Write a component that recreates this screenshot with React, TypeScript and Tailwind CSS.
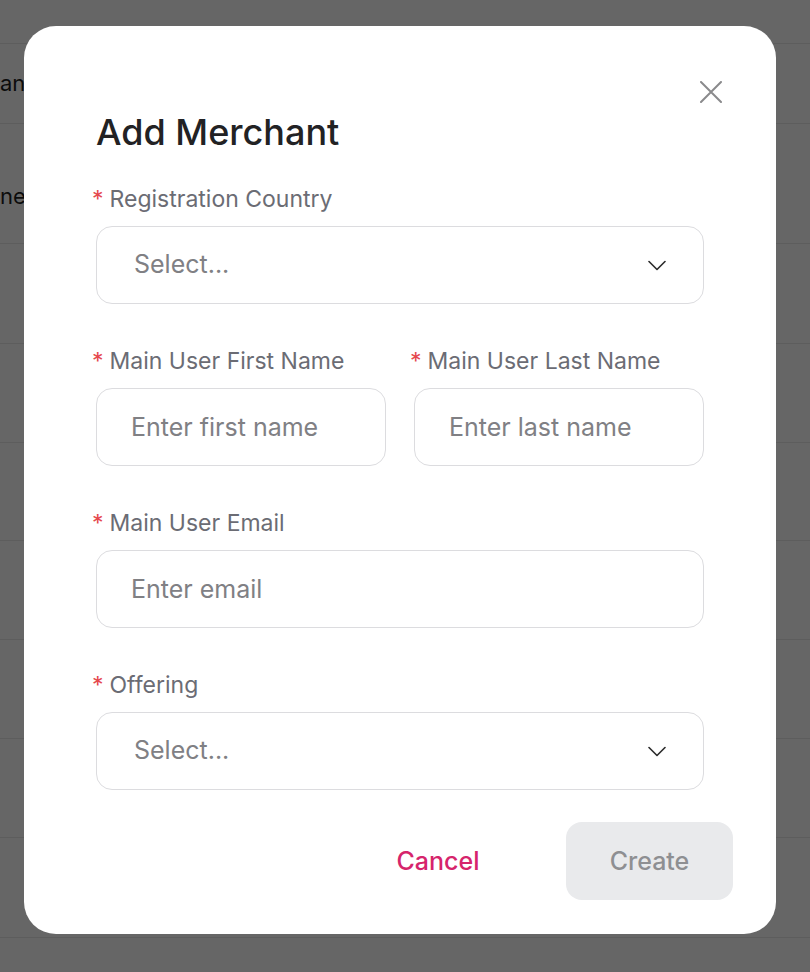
import { ReactNode } from 'react';

// Add Merchant modal over a dimmed list page

const rows = [
  { h: 'h-[80px]', text: 'anagement' },
  { h: 'h-[120px]', text: 'nel', pad: 'pt-[26px]' },
  { h: 'h-[100px]', text: '' },
  { h: 'h-[99px]', text: '' },
  { h: 'h-[98px]', text: '' },
  { h: 'h-[99px]', text: '' },
  { h: 'h-[99px]', text: '' },
  { h: 'h-[99px]', text: '' },
  { h: 'h-[100px]', text: '' },
];

function Label({ children }: { children: ReactNode }) {
  return (
    <div className="-ml-[4px] flex h-[30px] items-center text-[23px] leading-[30px] text-[#6b6c74]">
      <span className="mr-[6px] text-[#e5484d]">*</span>
      {children}
    </div>
  );
}

function Chevron() {
  return (
    <svg width="18" height="11" viewBox="0 0 18 11" fill="none">
      <path d="M1 1.5 L9 9.5 L17 1.5" stroke="#2a2a2a" strokeWidth="1.6" strokeLinecap="round" strokeLinejoin="round" />
    </svg>
  );
}

function SelectBox() {
  return (
    <div className="mt-[12px] flex h-[78px] items-center justify-between rounded-[16px] border border-[#dcdcdf] pl-[37px] pr-[37px]">
      <span className="text-[25px] text-[#808084]">Select...</span>
      <Chevron />
    </div>
  );
}

function TextBox({ placeholder }: { placeholder: string }) {
  return (
    <input
      placeholder={placeholder}
      className="mt-[12px] h-[78px] w-full rounded-[16px] border border-[#dcdcdf] bg-white px-[34px] text-[25px] text-[#222] outline-none placeholder:text-[#808084]"
    />
  );
}

export default function App() {
  return (
    <div className="relative h-[972px] w-[810px] overflow-hidden bg-white font-['Inter','Liberation_Sans',sans-serif]">
      {/* page underneath */}
      <div className="flex flex-col">
        <div className="h-[44px] border-b border-[#e8e8e8]" />
        {rows.map((r, i) => (
          <div key={i} className={`${r.h} ${r.pad ?? ''} flex items-center border-b border-[#e8e8e8] text-[22px] text-[#1f1f1f]`}>
            {r.text}
          </div>
        ))}
      </div>

      {/* overlay */}
      <div className="absolute inset-0 bg-black/60 pl-[24px] pt-[26px]">
        <div className="relative flex h-[908px] w-[752px] flex-col rounded-[32px] bg-white px-[72px] pt-[85px]">
          <button className="absolute right-[51px] top-[52px] flex h-[28px] w-[28px] items-center justify-center">
            <svg width="22" height="22" viewBox="0 0 22 22" fill="none">
              <path d="M1 1 L21 21 M21 1 L1 21" stroke="#8a8a8c" strokeWidth="2" strokeLinecap="round" />
            </svg>
          </button>

          <h2 className="h-[42px] text-[36px] font-medium leading-[42px] text-[#222224]">Add Merchant</h2>

          <div className="mt-[31px]">
            <Label>Registration Country</Label>
            <SelectBox />
          </div>

          <div className="mt-[42px] grid grid-cols-2 gap-x-[28px]">
            <div>
              <Label>Main User First Name</Label>
              <TextBox placeholder="Enter first name" />
            </div>
            <div>
              <Label>Main User Last Name</Label>
              <TextBox placeholder="Enter last name" />
            </div>
          </div>

          <div className="mt-[42px]">
            <Label>Main User Email</Label>
            <TextBox placeholder="Enter email" />
          </div>

          <div className="mt-[42px]">
            <Label>Offering</Label>
            <SelectBox />
          </div>

          <div className="-mr-[29px] mt-[32px] flex justify-end gap-[58px]">
            <button className="h-[78px] w-[140px] pt-[2px] text-[25px] font-medium text-[#d6246c]">Cancel</button>
            <button className="h-[78px] w-[167px] rounded-[16px] bg-[#e9eaec] pt-[2px] text-[25px] font-medium text-[#8e8f92]">
              Create
            </button>
          </div>
        </div>
      </div>
    </div>
  );
}
